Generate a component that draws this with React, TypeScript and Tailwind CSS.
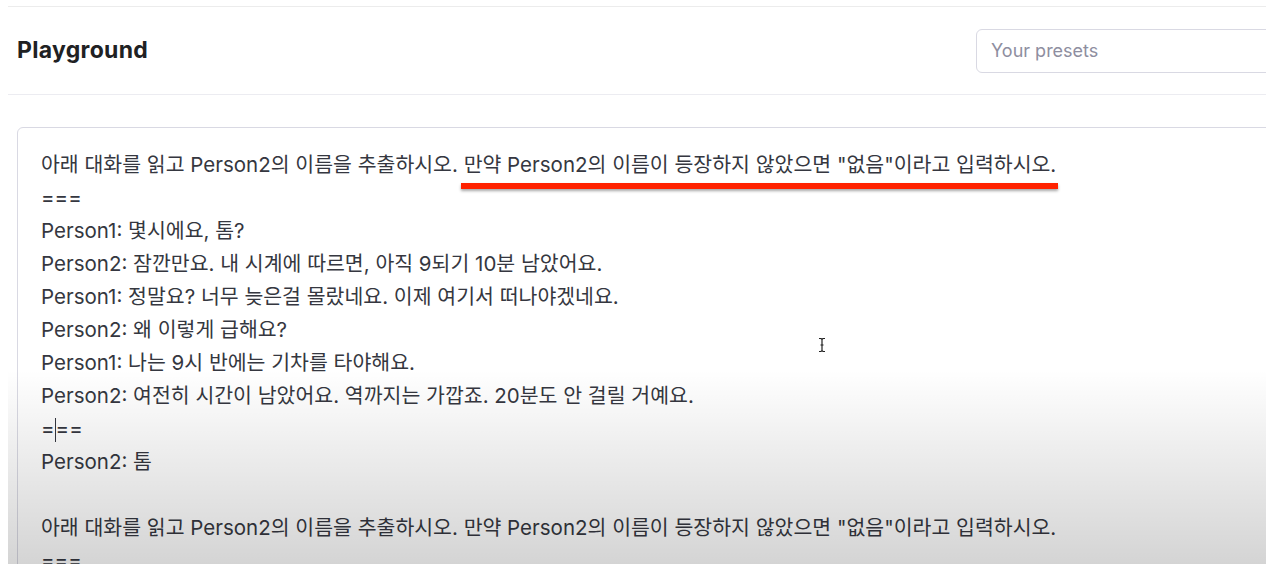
import React from "react";

const FONT = 'Inter, "Noto Sans CJK KR", sans-serif';

const prompt =
  '아래 대화를 읽고 Person2의 이름을 추출하시오. 만약 Person2의 이름이 등장하지 않았으면 "없음"이라고 입력하시오.';

const lines: string[] = [
  prompt,
  "===",
  "Person1: 몇시에요, 톰?",
  "Person2: 잠깐만요. 내 시계에 따르면, 아직 9되기 10분 남았어요.",
  "Person1: 정말요? 너무 늦은걸 몰랐네요. 이제 여기서 떠나야겠네요.",
  "Person2: 왜 이렇게 급해요?",
  "Person1: 나는 9시 반에는 기차를 타야해요.",
  "Person2: 여전히 시간이 남았어요. 역까지는 가깝죠. 20분도 안 걸릴 거예요.",
  "CARET",
  "Person2: 톰",
  "",
  prompt,
  "===",
];

function IBeam() {
  return (
    <svg width="10" height="16" viewBox="0 0 10 16" className="absolute left-[817px] top-[337px] pointer-events-none">
      <path d="M2 1.5h2l1 1 1-1h2M5 2.5v11M2 14.5h2l1-1 1 1h2M3.5 8h3" stroke="#222" strokeWidth="1.2" fill="none" />
    </svg>
  );
}

export default function App() {
  return (
    <div className="relative w-[1266px] h-[564px] overflow-hidden bg-white" style={{ fontFamily: FONT }}>
      <div className="ml-[8px] pt-[6px]">
        <div className="border-t border-[#ececec]">
          <div className="h-[88px] flex items-center justify-between border-b border-[#ececf1] pl-[9px]">
            <h1 className="text-[23px] font-bold text-[#202123] tracking-[0.3px]">Playground</h1>
            <div className="w-[310px] h-[44px] shrink-0 -mr-[20px] flex items-center border border-[#d9d9e3] rounded-[6px] pl-[14px]">
              <span className="text-[18px] text-[#8e8ea0]">Your presets</span>
            </div>
          </div>
          <div className="pt-[32px] pl-[9px]">
            <div className="w-[1300px] border border-[#d9d9e3] rounded-tl-[6px] pl-[23px] pt-[20px]">
              {lines.map((l, i) =>
                l === "CARET" ? (
                  <div key={i} className="h-[33px] leading-[33px] text-[20.5px] text-[#353740]">
                    =<span className="inline-block w-[1px] h-[24px] bg-[#353740] align-middle" />==
                  </div>
                ) : (
                  <div key={i} className="h-[33px] leading-[33px] text-[20.5px] text-[#353740] whitespace-pre">
                    {l}
                  </div>
                )
              )}
            </div>
          </div>
        </div>
      </div>
      <div className="absolute left-[461px] top-[183px] w-[597px] h-[6px] bg-[#ff2200] shadow-[0_2px_3px_rgba(0,0,0,0.35)]" />
      <IBeam />
      <div className="absolute left-[8px] right-0 top-[370px] bottom-0 pointer-events-none bg-gradient-to-b from-[rgba(0,0,0,0)] to-[rgba(0,0,0,0.17)]" />
    </div>
  );
}
